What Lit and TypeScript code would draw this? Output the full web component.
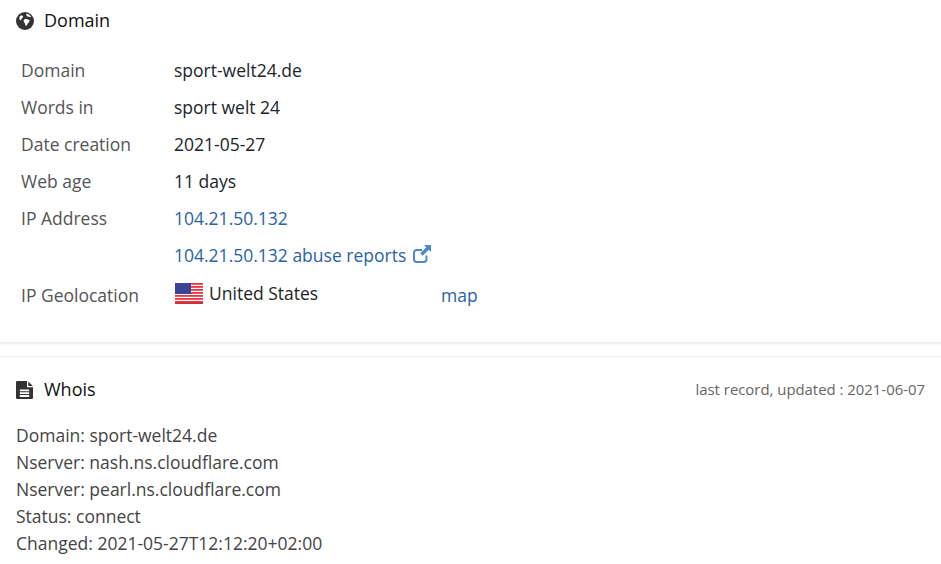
import { LitElement, html, css, svg } from "lit";
import { customElement } from "lit/decorators.js";

const globe = svg`<circle cx="9" cy="9" r="9" fill="currentColor"/>
<path d="M4.800 3.600c1.100-.5 2.200.1 2.300 1 .1.900-.6 1.300-1.200 1.900-.6.700-.5 1.500-1.100 1.700-.7.200-1.300-.8-1.500-1.800-.2-1 .5-2.300 1.500-2.800zM8.500 6.800c1.300-.5 2.500.3 3.700.6 1 .3 1.700.7 1.400 1.600-.4 1.200-1.300 1.700-2 2.800-.5.800-.7 2-1.400 2.100-.7.100-.9-1.200-1.100-2-.2-1-1-1.500-1.400-2.500-.4-1 .8-2.200 1.800-2.600zM11 1.800c1.500.3 3 1.300 3.700 2.500.4.700-.2 1-.9.800-.8-.3-1.200-.7-2-.7-.8 0-1.500-.5-1.500-1.400 0-.5.200-1.300.7-1.200z" fill="#fff"/>`;
const file = svg`<path d="M1.200 0h9.800v6.200h6v10.600a1.200 1.200 0 0 1-1.200 1.200H1.200A1.200 1.200 0 0 1 0 16.800V1.200A1.200 1.200 0 0 1 1.200 0z" fill="currentColor"/>
<path d="M12.300.6l4.500 4.400h-4.500z" fill="currentColor"/>
<path d="M3.800 8.500h9.400v1.800H3.800zM3.800 11.300h9.400v1.800H3.800zM3.800 14.100h9.400v1.800H3.800z" fill="#fff"/>`;
const ext = svg`<path d="M13.500 10.500v3.800a2.700 2.700 0 0 1-2.700 2.700H3.700A2.700 2.700 0 0 1 1 14.300V7.700A2.700 2.700 0 0 1 3.700 5h5.300" fill="none" stroke="currentColor" stroke-width="1.900"/>
<path d="M11 0h7v7l-2.300-2.300-6 6-2.400-2.400 6-6z" fill="currentColor"/>`;

@customElement("app-root")
export class AppRoot extends LitElement {
  static styles = css`
    :host { display: block; width: 941px; height: 564px; overflow: hidden; background: #fff;
      font-family: "Open Sans", sans-serif; font-size: 17.5px; line-height: 27px; color: #212529; }
    a { color: #2a62a8; text-decoration: none; }
    svg { display: block; }
    .section { padding: 7px 16px 0; }
    .heading { display: flex; align-items: center; gap: 10px; height: 27px; color: #111; font-size: 18px; font-weight: 500; }
    .heading svg { color: #333; width: 18px; height: 18px; flex: none; }
    .rows { margin-top: 23px; padding-left: 5px; display: grid; grid-template-columns: 153px 267px auto;
      grid-template-rows: repeat(6, 37px) 40px; justify-content: start; }
    .label { color: #555; }
    .value { white-space: nowrap; }
    .bottom { align-self: end; height: 27px; margin-bottom: 10px; }
    .ext { display: inline-block; width: 18px; height: 18px; vertical-align: -1px; color: #4a88cb; margin-left: 2px; }
    .geo { display: flex; align-items: center; gap: 6px; margin-top: 1px; margin-left: 1px; height: 27px; }
    .flag { width: 28px; height: 21px; flex: none; }
    .rule-shadow { margin-top: 23px; height: 3px; background: linear-gradient(#ededed, #fbfbfb); }
    .rule { margin-top: 11px; height: 1px; background: #ececec; }
    .whois-head { display: flex; justify-content: space-between; align-items: center; margin-top: 19px; padding: 0 16px; }
    .updated { font-size: 14.9px; color: #666; }
    .whois { margin-top: 19px; padding: 0 16px; color: #444; }
  `;

  flag() {
    const stripes = [];
    for (let i = 0; i < 7; i++) stripes.push(svg`<rect x="0" y=${i * 3} width="28" height="1.800" fill="#e8343e"/>`);
    return html`<svg class="flag" viewBox="0 0 28 21">
      <rect width="28" height="21" fill="#fff"/>
      ${stripes}
      <rect y="19.200" width="28" height="1.800" fill="#d22a35"/>
      <rect width="16" height="11" fill="#3a4396"/>
    </svg>`;
  }

  render() {
    return html`
      <div class="section">
        <div class="heading"><svg viewBox="0 0 18 18">${globe}</svg><span>Domain</span></div>
        <div class="rows">
          <div class="label">Domain</div><div class="value">sport-welt24.de</div><div></div>
          <div class="label">Words in</div><div class="value">sport welt 24</div><div></div>
          <div class="label">Date creation</div><div class="value">2021-05-27</div><div></div>
          <div class="label">Web age</div><div class="value">11 days</div><div></div>
          <div class="label">IP Address</div><div class="value"><a href="#">104.21.50.132</a></div><div></div>
          <div class="label"></div>
          <div class="value"><a href="#">104.21.50.132 abuse reports <svg class="ext" style="display:inline-block" viewBox="0 0 18 18">${ext}</svg></a></div><div></div>
          <div class="label bottom">IP Geolocation</div>
          <div class="geo">${this.flag()}<span>United States</span></div>
          <div class="bottom"><a href="#">map</a></div>
        </div>
      </div>
      <div class="rule-shadow"></div>
      <div class="rule"></div>
      <div class="whois-head">
        <div class="heading"><svg viewBox="0 0 18 18">${file}</svg><span>Whois</span></div>
        <div class="updated">last record, updated : 2021-06-07</div>
      </div>
      <div class="whois">
        <div>Domain: sport-welt24.de</div>
        <div>Nserver: nash.ns.cloudflare.com</div>
        <div>Nserver: pearl.ns.cloudflare.com</div>
        <div>Status: connect</div>
        <div>Changed: 2021-05-27T12:12:20+02:00</div>
      </div>
    `;
  }
}
